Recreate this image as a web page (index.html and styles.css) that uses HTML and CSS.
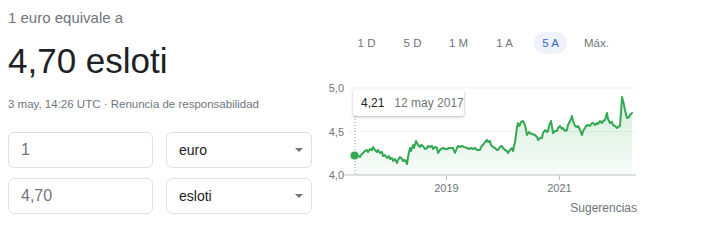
FILE: index.html
```html
<!DOCTYPE html>
<html lang="es">
<head>
    <meta charset="UTF-8">
    <meta name="viewport" content="width=device-width, initial-scale=1.0">
    <title>Conversor de divisas</title>
    <link rel="stylesheet" href="styles.css">
</head>
<body>
    <div class="page">
        <div class="converter">
            <div class="label">1 euro equivale a</div>
            <div class="result">4,70 esloti</div>
            <div class="meta">3 may, 14:26 UTC · <span class="disclaimer">Renuncia de responsabilidad</span></div>

            <div class="fields">
                <div class="field amount">1</div>
                <div class="field currency"><span>euro</span><span class="arrow"></span></div>
                <div class="field amount">4,70</div>
                <div class="field currency"><span>esloti</span><span class="arrow"></span></div>
            </div>
        </div>

        <div class="chart-panel">
            <div class="ranges">
                <div class="range">1 D</div>
                <div class="range">5 D</div>
                <div class="range">1 M</div>
                <div class="range">1 A</div>
                <div class="range active">5 A</div>
                <div class="range">Máx.</div>
            </div>

            <div class="chart">
                <svg width="317" height="122" viewBox="320 78 317 122">
                    <defs>
                        <linearGradient id="areaFill" x1="0" y1="0" x2="0" y2="1">
                            <stop offset="0" stop-color="#34a853" stop-opacity="0.22"/>
                            <stop offset="1" stop-color="#34a853" stop-opacity="0.03"/>
                        </linearGradient>
                    </defs>

                    <!-- rejilla y ejes -->
                    <line class="grid" x1="348" y1="88" x2="636" y2="88"/>
                    <line class="grid" x1="348" y1="131.5" x2="636" y2="131.5"/>
                    <line class="axis" x1="343" y1="175" x2="636" y2="175"/>
                    <line class="axis" x1="446.5" y1="175" x2="446.5" y2="180"/>
                    <line class="axis" x1="559.5" y1="175" x2="559.5" y2="180"/>

                    <text class="tick" x="344" y="91.5" text-anchor="end">5,0</text>
                    <text class="tick" x="344" y="135.5" text-anchor="end">4,5</text>
                    <text class="tick" x="344" y="179" text-anchor="end">4,0</text>
                    <text class="tick" x="446.5" y="192" text-anchor="middle">2019</text>
                    <text class="tick" x="559.5" y="192" text-anchor="middle">2021</text>

                    <!-- area bajo la curva -->
                    <path fill="url(#areaFill)" d="M355,175 L355,156 357,155 360,157 361,155 363,153 365,151 367,150 368,152 370,149 372,150 373,147 375,150 377,152 378,150 380,153 382,152 383,156 385,155 387,158 389,156 390,159 392,158 393,161 395,159 397,163 398,160 400,157 402,159 403,161 405,160 407,164 408,157 410,148 411,151 413,145 414,148 416,141 418,145 420,147 421,145 423,146 425,149 427,148 428,146 430,147 432,146 433,149 435,147 437,148 438,153 440,150 441,149 443,148 445,149 447,149 449,148 451,148 453,148 455,153 457,148 458,146 460,147 462,146 464,147 467,148 469,149 471,148 473,149 475,148 477,150 480,150 481,147 483,145 485,142 487,140 488,142 490,141 491,145 493,147 495,148 497,150 498,150 500,147 502,146 503,148 505,150 507,151 508,153 510,150 512,148 513,151 515,142 516,135 517,127 518,123 519,126 520,125 521,122 523,121 524,123 525,125 526,130 527,135 529,132 530,133 532,134 535,135 537,137 538,140 540,138 542,138 543,133 545,130 547,132 548,131 549,126 551,121 552,127 553,133 555,131 557,131 558,128 560,126 562,129 563,128 565,131 567,130 568,125 570,121 572,116 573,121 575,126 577,127 578,126 580,130 582,135 583,131 585,128 586,126 588,125 590,126 592,123 593,123 595,125 597,123 598,124 600,121 602,123 603,121 605,120 607,113 608,119 610,123 612,122 613,125 615,126 617,128 618,127 620,126 621,112 622,97 624,105 625,110 627,118 629,117 630,115 632,113 L632,175 Z"/>

                    <!-- linea de cotizacion -->
                    <polyline class="series" points="355,156 357,155 360,157 361,155 363,153 365,151 367,150 368,152 370,149 372,150 373,147 375,150 377,152 378,150 380,153 382,152 383,156 385,155 387,158 389,156 390,159 392,158 393,161 395,159 397,163 398,160 400,157 402,159 403,161 405,160 407,164 408,157 410,148 411,151 413,145 414,148 416,141 418,145 420,147 421,145 423,146 425,149 427,148 428,146 430,147 432,146 433,149 435,147 437,148 438,153 440,150 441,149 443,148 445,149 447,149 449,148 451,148 453,148 455,153 457,148 458,146 460,147 462,146 464,147 467,148 469,149 471,148 473,149 475,148 477,150 480,150 481,147 483,145 485,142 487,140 488,142 490,141 491,145 493,147 495,148 497,150 498,150 500,147 502,146 503,148 505,150 507,151 508,153 510,150 512,148 513,151 515,142 516,135 517,127 518,123 519,126 520,125 521,122 523,121 524,123 525,125 526,130 527,135 529,132 530,133 532,134 535,135 537,137 538,140 540,138 542,138 543,133 545,130 547,132 548,131 549,126 551,121 552,127 553,133 555,131 557,131 558,128 560,126 562,129 563,128 565,131 567,130 568,125 570,121 572,116 573,121 575,126 577,127 578,126 580,130 582,135 583,131 585,128 586,126 588,125 590,126 592,123 593,123 595,125 597,123 598,124 600,121 602,123 603,121 605,120 607,113 608,119 610,123 612,122 613,125 615,126 617,128 618,127 620,126 621,112 622,97 624,105 625,110 627,118 629,117 630,115 632,113"/>

                    <!-- punto seleccionado -->
                    <line class="cursor" x1="355" y1="116" x2="355" y2="175"/>
                    <circle cx="354.5" cy="155.5" r="4" fill="#34a853"/>
                </svg>

                <div class="tooltip">
                    <span class="tooltip-value">4,21</span>
                    <span class="tooltip-date">12 may 2017</span>
                </div>
            </div>

            <div class="source">Sugerencias</div>
        </div>
    </div>
</body>
</html>
```

FILE: styles.css
```css
* {
    margin: 0;
    padding: 0;
    box-sizing: border-box;
}

body {
    font-family: 'Liberation Sans', Arial, sans-serif;
    background: white;
    color: #202124;
}

.page {
    display: flex;
    padding: 8px 0 0 8px;
}

/* Columna izquierda: resultado y campos */
.converter {
    width: 305px;
}

.label {
    font-size: 15px;
    line-height: 20px;
    color: #70757a;
}

.result {
    margin-top: 13px;
    font-size: 35px;
    line-height: 40px;
    color: #202124;
}

.meta {
    margin-top: 15px;
    font-size: 11.5px;
    line-height: 16px;
    color: #70757a;
}

.disclaimer {
    color: #70757a;
}

.fields {
    margin-top: 20px;
    display: grid;
    grid-template-columns: 145px 146px;
    column-gap: 13px;
    row-gap: 10px;
}

.field {
    height: 36px;
    border: 1px solid #dfe1e5;
    border-radius: 6px;
    display: flex;
    align-items: center;
    padding: 0 8px 0 12px;
}

.field.amount {
    font-size: 16px;
    color: #70757a;
}

.field.currency {
    justify-content: space-between;
    font-size: 14px;
    color: #202124;
}

.arrow {
    width: 0;
    height: 0;
    border-left: 4px solid transparent;
    border-right: 4px solid transparent;
    border-top: 4px solid #70757a;
}

/* Columna derecha: grafico */
.chart-panel {
    margin-left: 7px;
    width: 317px;
    padding-top: 24px;
}

.ranges {
    display: flex;
    gap: 13px;
    padding-left: 30px;
}

.range {
    width: 33px;
    height: 22px;
    border-radius: 11px;
    display: flex;
    align-items: center;
    justify-content: center;
    font-size: 11.5px;
    color: #70757a;
}

.range.active {
    background: #eff2f9;
    color: #3367d6;
}

.chart {
    position: relative;
    margin-top: 24px;
    height: 122px;
}

.chart svg {
    display: block;
}

.grid {
    stroke: #f1f3f4;
    stroke-width: 1;
}

.axis {
    stroke: #bdc1c6;
    stroke-width: 1;
}

.tick {
    font-family: 'Liberation Sans', Arial, sans-serif;
    font-size: 11px;
    fill: #70757a;
}

.series {
    fill: none;
    stroke: #34a853;
    stroke-width: 2;
    stroke-linejoin: round;
    stroke-linecap: round;
}

.cursor {
    stroke: #9aa0a6;
    stroke-width: 1;
    stroke-dasharray: 1 2;
}

.tooltip {
    position: absolute;
    left: 33px;
    top: 12px;
    width: 111px;
    height: 26px;
    background: white;
    border-radius: 2px;
    box-shadow: 0 1px 3px rgba(0, 0, 0, 0.28);
    display: flex;
    align-items: center;
    gap: 10px;
    padding-left: 8px;
    font-size: 12px;
}

.tooltip-value {
    color: #202124;
}

.tooltip-date {
    color: #70757a;
}

.source {
    font-size: 12px;
    line-height: 16px;
    color: #70757a;
    text-align: right;
}
```
